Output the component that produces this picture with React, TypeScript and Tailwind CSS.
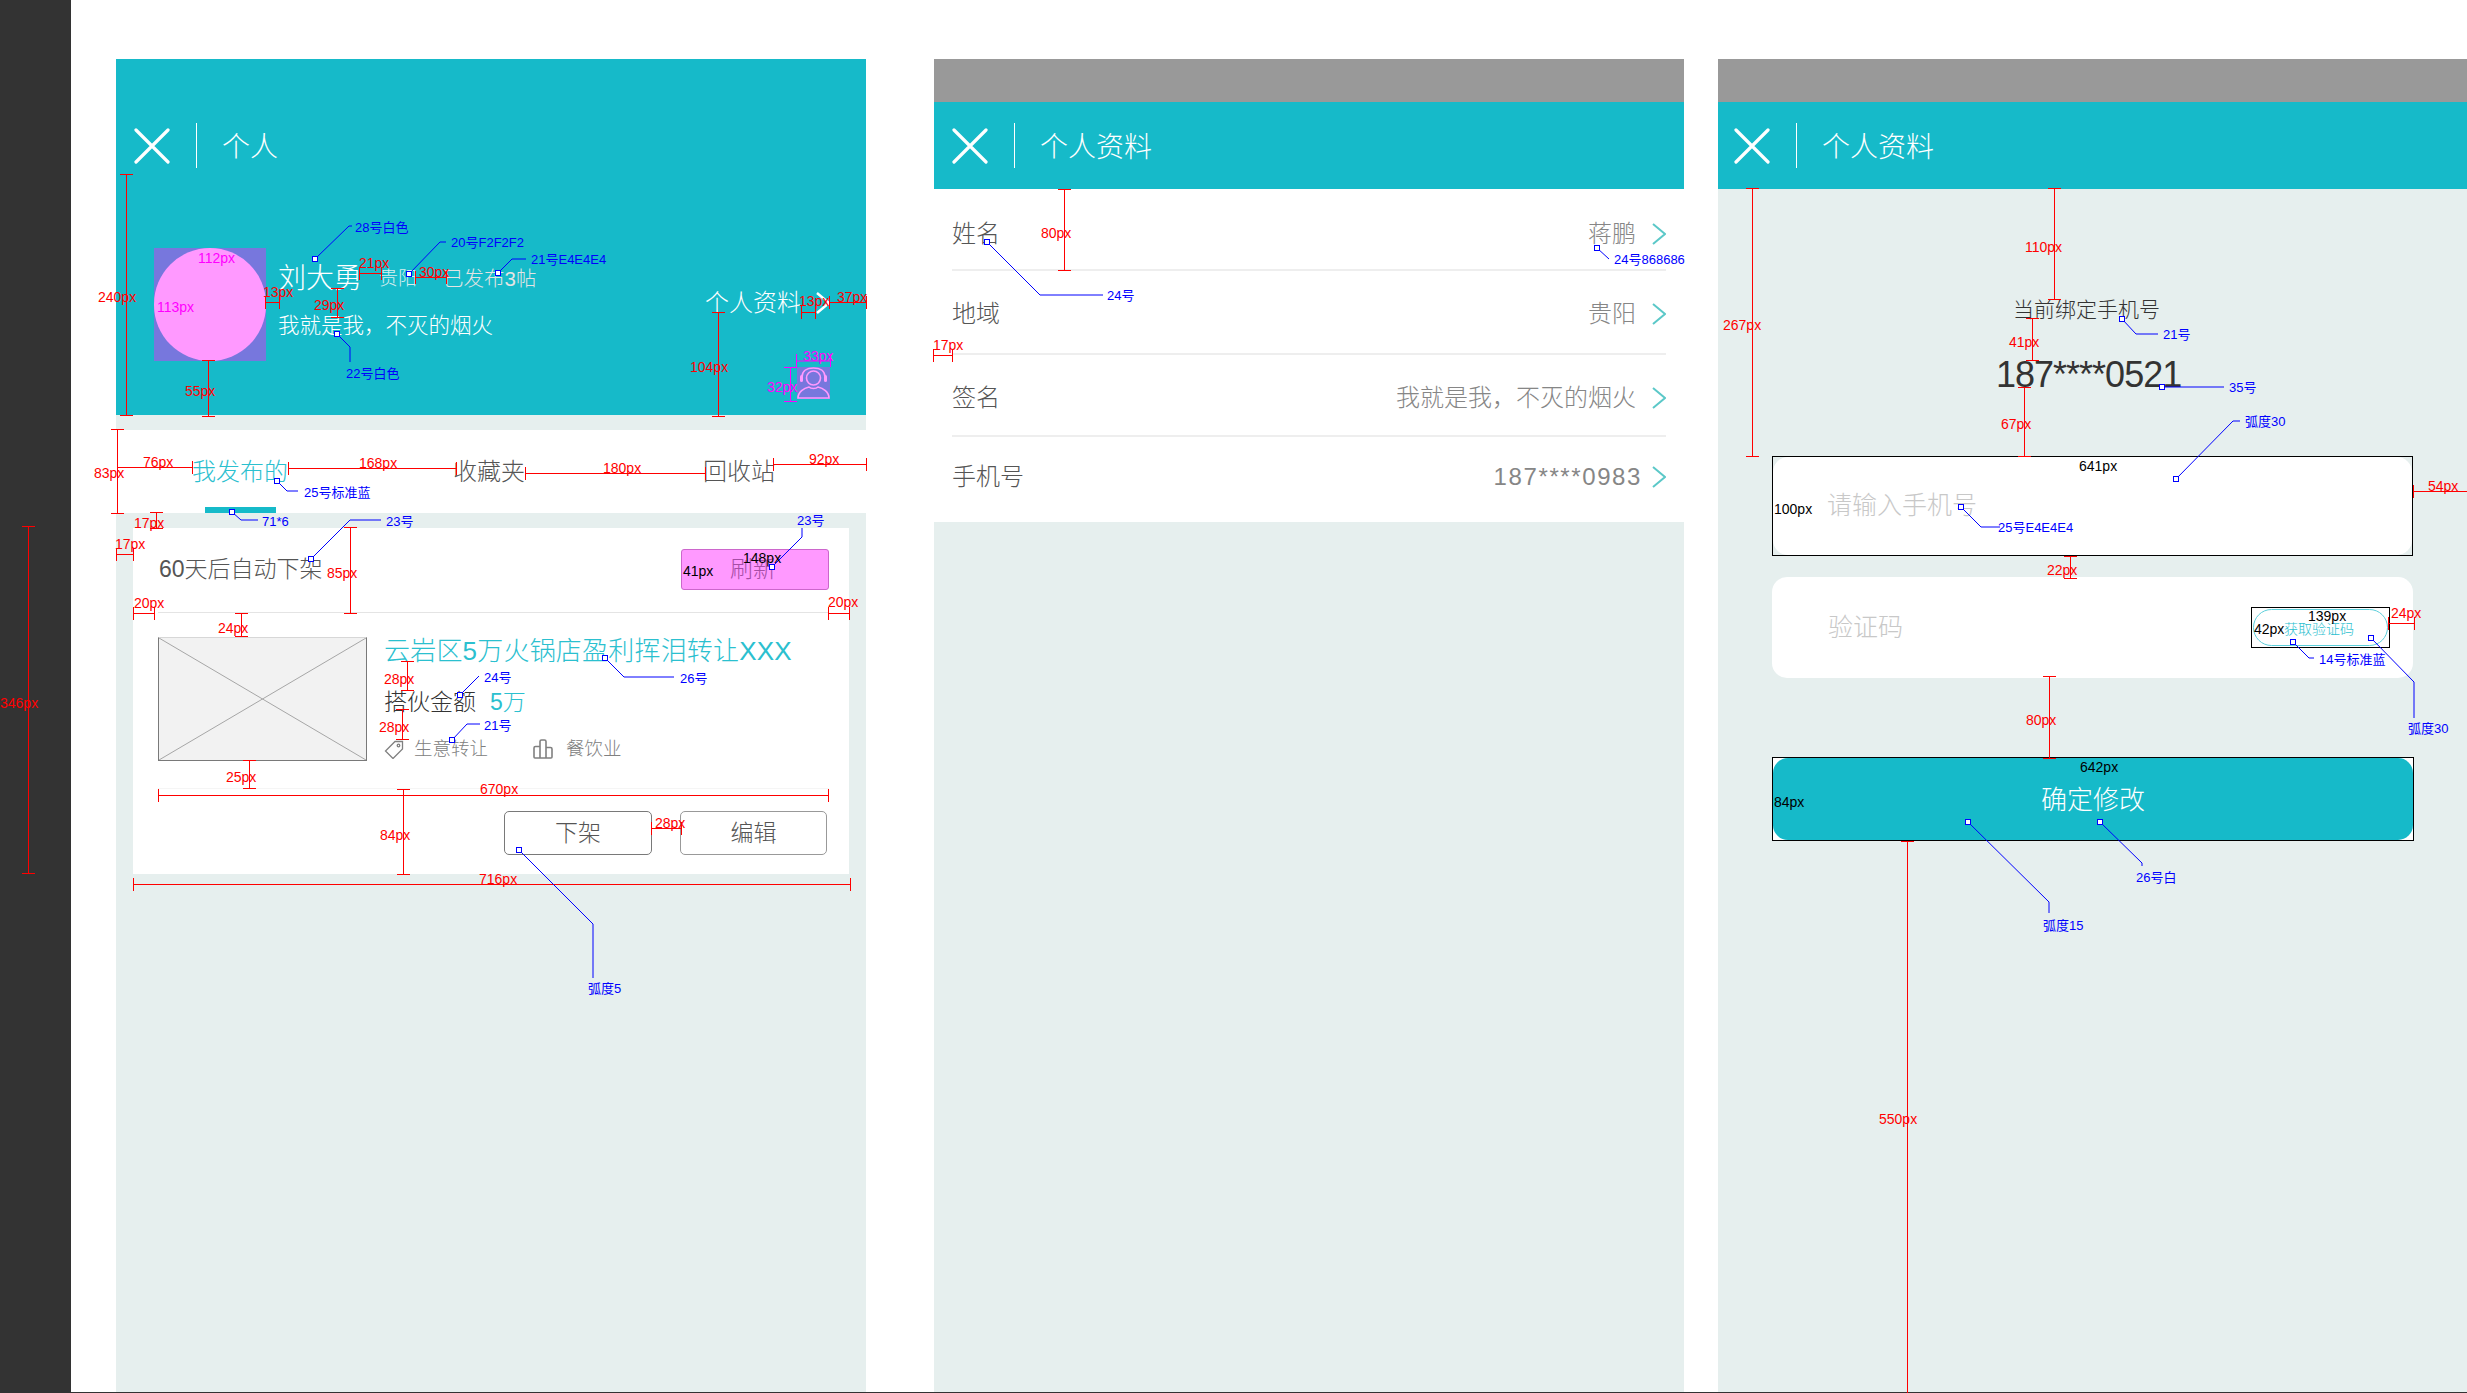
import React from "react";

const teal = "bg-[#16bac9]";

// annotation labels laid over the mockups: [text, position classes]
const redLabels: [string, string][] = [
  ["240px", "left-[98px] top-[288px]"],
  ["55px", "left-[185px] top-[382px]"],
  ["21px", "left-[359px] top-[254px]"],
  ["30px", "left-[419px] top-[263px]"],
  ["13px", "left-[263px] top-[283px]"],
  ["29px", "left-[314px] top-[296px]"],
  ["104px", "left-[690px] top-[358px]"],
  ["13px", "left-[799px] top-[292px]"],
  ["37px", "left-[837px] top-[288px]"],
  ["83px", "left-[94px] top-[464px]"],
  ["76px", "left-[143px] top-[453px]"],
  ["168px", "left-[359px] top-[454px]"],
  ["180px", "left-[603px] top-[459px]"],
  ["92px", "left-[809px] top-[450px]"],
  ["17px", "left-[134px] top-[514px]"],
  ["17px", "left-[115px] top-[535px]"],
  ["85px", "left-[327px] top-[564px]"],
  ["20px", "left-[134px] top-[594px]"],
  ["20px", "left-[828px] top-[593px]"],
  ["24px", "left-[218px] top-[619px]"],
  ["346px", "left-[0px] top-[694px]"],
  ["28px", "left-[384px] top-[670px]"],
  ["28px", "left-[379px] top-[718px]"],
  ["25px", "left-[226px] top-[768px]"],
  ["670px", "left-[480px] top-[780px]"],
  ["84px", "left-[380px] top-[826px]"],
  ["28px", "left-[655px] top-[814px]"],
  ["716px", "left-[479px] top-[870px]"],
  ["80px", "left-[1041px] top-[224px]"],
  ["17px", "left-[933px] top-[336px]"],
  ["110px", "left-[2025px] top-[238px]"],
  ["267px", "left-[1723px] top-[316px]"],
  ["41px", "left-[2009px] top-[333px]"],
  ["67px", "left-[2001px] top-[415px]"],
  ["54px", "left-[2428px] top-[477px]"],
  ["22px", "left-[2047px] top-[561px]"],
  ["24px", "left-[2391px] top-[604px]"],
  ["80px", "left-[2026px] top-[711px]"],
  ["550px", "left-[1879px] top-[1110px]"],
];

const magentaLabels: [string, string][] = [
  ["112px", "left-[198px] top-[249px]"],
  ["113px", "left-[157px] top-[298px]"],
  ["33px", "left-[803px] top-[347px]"],
  ["32px", "left-[767px] top-[378px]"],
];

const blackLabels: [string, string][] = [
  ["148px", "left-[743px] top-[549px]"],
  ["41px", "left-[683px] top-[562px]"],
  ["641px", "left-[2079px] top-[457px]"],
  ["100px", "left-[1774px] top-[500px]"],
  ["139px", "left-[2308px] top-[607px]"],
  ["42px", "left-[2254px] top-[620px]"],
  ["642px", "left-[2080px] top-[758px]"],
  ["84px", "left-[1774px] top-[793px]"],
];

const blueLabels: [string, string][] = [
  ["28号白色", "left-[355px] top-[219px]"],
  ["20号F2F2F2", "left-[451px] top-[234px]"],
  ["21号E4E4E4", "left-[531px] top-[251px]"],
  ["22号白色", "left-[346px] top-[365px]"],
  ["25号标准蓝", "left-[304px] top-[484px]"],
  ["71*6", "left-[262px] top-[513px]"],
  ["23号", "left-[386px] top-[513px]"],
  ["23号", "left-[797px] top-[512px]"],
  ["26号", "left-[680px] top-[670px]"],
  ["24号", "left-[484px] top-[669px]"],
  ["21号", "left-[484px] top-[717px]"],
  ["弧度5", "left-[588px] top-[980px]"],
  ["24号", "left-[1107px] top-[287px]"],
  ["24号868686", "left-[1614px] top-[251px]"],
  ["21号", "left-[2163px] top-[326px]"],
  ["35号", "left-[2229px] top-[379px]"],
  ["弧度30", "left-[2245px] top-[413px]"],
  ["25号E4E4E4", "left-[1998px] top-[519px]"],
  ["14号标准蓝", "left-[2319px] top-[651px]"],
  ["弧度30", "left-[2408px] top-[720px]"],
  ["26号白", "left-[2136px] top-[869px]"],
  ["弧度15", "left-[2043px] top-[917px]"],
];

// [x, y1, y2]
const vDims = [
  [126, 174, 415], [208, 360, 416], [337, 288, 317], [718, 312, 416], [117, 429, 513],
  [28, 526, 873], [156, 512, 528], [350, 527, 613], [241, 613, 636], [407, 661, 690],
  [402, 709, 739], [249, 760, 788], [403, 789, 874], [1064, 189, 270], [1752, 188, 456],
  [2054, 188, 299], [2032, 318, 360], [2024, 387, 456], [2070, 556, 578], [2049, 676, 758],
  [1907, 841, 1400],
];
// [y, x1, x2]
const hDims = [
  [302, 265, 279], [273, 359, 381], [277, 415, 446], [312, 801, 815], [302, 829, 866],
  [467, 117, 192], [468, 288, 456], [473, 525, 705], [464, 773, 866], [554, 116, 133],
  [613, 133, 154], [613, 828, 849], [795, 158, 828], [828, 651, 681], [884, 133, 850],
  [355, 933, 952], [491, 2413, 2467], [623, 2388, 2414],
];

// leader lines: the first point carries the little square
const leaders = [
  "315,259 349,226 352,226",
  "409,274 440,242 446,242",
  "498,273 512,259 526,259",
  "337,334 350,347 350,362",
  "277,481 287,491 298,491",
  "232,512 241,520 258,520",
  "311,559 350,520 381,520",
  "772,567 802,537 802,528",
  "605,658 624,677 674,677",
  "460,695 479,676",
  "452,740 467,724 480,724",
  "519,850 593,924 593,978",
  "987,242 1040,295 1103,295",
  "1597,248 1609,259",
  "2122,319 2136,334 2158,334",
  "2162,387 2224,387",
  "2176,479 2233,421 2240,421",
  "1961,507 1981,527 2000,527",
  "2293,642 2309,658 2314,658",
  "2371,638 2414,682 2414,718",
  "1968,822 2049,902 2049,913",
  "2100,822 2142,863 2142,866",
];

const Labels: React.FC<{ items: [string, string][]; color: string }> = ({ items, color }) => (
  <>
    {items.map(([text, pos], i) => (
      <span key={i} className={`absolute whitespace-nowrap leading-[18px] font-normal ${color} ${pos}`}>
        {text}
      </span>
    ))}
  </>
);

const Annotations: React.FC = () => (
  <>
    <svg className="absolute left-0 top-0 pointer-events-none" width={2467} height={1393} fill="none">
      {vDims.map(([x, a, b], i) => (
        <path key={i} d={`M${x + 0.5} ${a}V${b}M${x - 6} ${a + 0.5}H${x + 7}M${x - 6} ${b + 0.5}H${x + 7}`} stroke="#ff0000" />
      ))}
      {hDims.map(([y, a, b], i) => (
        <path key={i} d={`M${a} ${y + 0.5}H${b}M${a + 0.5} ${y - 6}V${y + 7}M${b + 0.5} ${y - 6}V${y + 7}`} stroke="#ff0000" />
      ))}
      {leaders.map((pts, i) => {
        const [x, y] = pts.split(" ")[0].split(",").map(Number);
        return (
          <g key={i} stroke="#0000ff">
            <polyline points={pts} />
            <rect x={x - 2.5} y={y - 2.5} width={5} height={5} fill="#ffffff" />
          </g>
        );
      })}
      {/* avatar measurements */}
      <path d="M796 361H831M796.5 354V367M830.5 354V367M790.5 367V401M784 367.5H797M784 401.5H797" stroke="#ff00ff" />
    </svg>
    <div className="text-[14px]">
      <Labels items={redLabels} color="text-[#ff0000]" />
      <Labels items={magentaLabels} color="text-[#ff00ff]" />
      <Labels items={blackLabels} color="text-black" />
    </div>
    <div className="text-[13px]">
      <Labels items={blueLabels} color="text-[#0000ff]" />
    </div>
  </>
);

const CloseIcon = () => (
  <svg width="36" height="36" viewBox="0 0 36 36" fill="none" stroke="#fff" strokeWidth="3.2" strokeLinecap="round">
    <path d="M2 2L34 34M34 2L2 34" />
  </svg>
);

const Chevron: React.FC<{ color?: string; width?: number }> = ({ color = "#5bc8c8", width = 2 }) => (
  <svg width="14" height="22" viewBox="0 0 14 22" fill="none" stroke={color} strokeWidth={width}>
    <path d="M1 1L13 11L1 21" />
  </svg>
);

const Header: React.FC<{ title: string; left?: string }> = ({ title, left = "pl-[18px]" }) => (
  <div className={`flex h-[87px] items-center ${left}`}>
    <CloseIcon />
    <div className="ml-[26px] h-[45px] w-px bg-white" />
    <span className="ml-[25px] pt-[5px] text-[28px] text-white">{title}</span>
  </div>
);

const HeadsetIcon = () => (
  <svg width="33" height="32" viewBox="0 0 33 32" fill="none" stroke="#ff99ff" strokeWidth="1.6" className="bg-[#7777dd]">
    <circle cx="16.5" cy="11" r="7" />
    <path d="M5 14V10C5 4 10 1 16.5 1S28 4 28 10V14" />
    <rect x="3" y="8" width="3" height="7" rx="1.5" fill="#ff99ff" stroke="none" />
    <rect x="27" y="8" width="3" height="7" rx="1.5" fill="#ff99ff" stroke="none" />
    <path d="M1 31C1 25 7 21 12 20C14 22 19 22 21 20C26 21 32 25 32 31Z" />
  </svg>
);

const TagIcon = () => (
  <svg width="20" height="19" viewBox="0 0 20 19" fill="none" stroke="#808080" strokeWidth="1.3">
    <path d="M11 1.5H18.5V9L9 18.5L1.5 11Z" />
    <circle cx="14.5" cy="5.5" r="1.3" />
  </svg>
);

const ChartIcon = () => (
  <svg width="20" height="20" viewBox="0 0 20 20" fill="none" stroke="#808080" strokeWidth="1.6">
    <path d="M7 7.5H2.5C1.5 7.5 1 8 1 9V18C1 18.600 1.500 19 2 19H18C18.500 19 19 18.600 19 18V10C19 9 18.500 8.500 17.500 8.500H13M7 19V2.500C7 1.500 7.500 1 8.500 1H11.500C12.500 1 13 1.500 13 2.500V19" />
  </svg>
);

const PersonalPanel = () => (
  <div className="flex w-[750px] flex-col bg-[#e6efee]">
    <div className={`h-[356px] ${teal} pt-[43px]`}>
      <Header title="个人" />
      <div className="mt-[59px] flex pl-[38px]">
        <div className="h-[113px] w-[112px] bg-[#7777dd]">
          <div className="h-full w-full rounded-full bg-[#ff99ff]" />
        </div>
        <div className="ml-[12px] mt-[13px]">
          <div className="flex items-center text-[#e4e4e4]">
            <span className="text-[28px] leading-[36px] text-white">刘大勇</span>
            <span className="ml-[17px] text-[19px] text-[#d6eef0]">贵阳</span>
            <span className="ml-[26px] text-[20.5px]">已发布3帖</span>
          </div>
          <div className="mt-[15px] text-[21.5px] leading-[28px] text-white">我就是我，不灭的烟火</div>
        </div>
        <div className="ml-auto mr-[36px] flex flex-col items-end">
          <div className="mt-[40px] flex items-center text-[24px] leading-[30px] text-white">
            个人资料
            <span className="ml-[15px]">
              <Chevron color="#ffffff" width={2.5} />
            </span>
          </div>
          <div className="mt-[49px]">
            <HeadsetIcon />
          </div>
        </div>
      </div>
    </div>

    <div className="mt-[15px] flex h-[83px] items-center bg-white pl-[76px] text-[24px] text-[#555555]">
      <span className="relative flex h-full items-center text-[#2bc0cf]">
        我发布的
        <span className={`absolute bottom-0 left-[13px] h-[6px] w-[71px] ${teal}`} />
      </span>
      <span className="ml-[165px]">收藏夹</span>
      <span className="ml-[178px]">回收站</span>
    </div>

    <div className="mx-[17px] mt-[15px] h-[346px] bg-white pl-[25px] pr-[20px] text-[#555555]">
      <div className="flex h-[85px] items-center justify-between border-b border-[#e4e4e4] pb-[2px]">
        <span className="ml-px text-[23px]">60天后自动下架</span>
        <div className="flex h-[41px] w-[148px] items-center justify-center rounded-[3px] border border-[#cc66cc] bg-[#ff99ff] pr-[4px] text-[23px] text-[#a64da6]">
          刷新
        </div>
      </div>
      <div className="flex h-[176px] border-b border-[#f5f5f5] pt-[24px]">
        <div className="h-[124px] w-[209px] border border-[#797979] border-t-[#d7d7d7] bg-[#f2f2f2]">
          <svg width="207" height="122" viewBox="0 0 207 122" stroke="#a6a6a6" strokeWidth="1">
            <path d="M0 0L207 122M207 0L0 122" />
          </svg>
        </div>
        <div className="ml-[17px]">
          <div className="text-[26px] leading-[28px] tracking-[0.2px] text-[#2bc0cf]">云岩区5万火锅店盈利挥泪转让XXX</div>
          <div className="mt-[22px] flex items-center text-[23px] leading-[30px]">
            <span className="text-[#333333]">搭伙金额</span>
            <span className="ml-[14px] text-[#2bc0cf]">5万</span>
          </div>
          <div className="mt-[19px] flex items-center text-[18.5px] leading-[26px] text-[#808080]">
            <TagIcon />
            <span className="ml-[10px]">生意转让</span>
            <span className="ml-[45px]">
              <ChartIcon />
            </span>
            <span className="ml-[13px]">餐饮业</span>
          </div>
        </div>
      </div>
      <div className="mr-[2px] flex justify-end gap-[28px] pt-[22px] text-[23px]">
        <div className="flex h-[44px] w-[148px] items-center justify-center rounded-[5px] border border-[#797979]">下架</div>
        <div className="flex h-[44px] w-[147px] items-center justify-center rounded-[5px] border border-[#999999]">编辑</div>
      </div>
    </div>
  </div>
);

const profileRows = [
  { label: "姓名", value: "蒋鹏", row: "h-[82px] pt-[9px]", text: "", gap: "ml-[16px]" },
  { label: "地域", value: "贵阳", row: "h-[84px] pt-[3px]", text: "", gap: "ml-[16px]" },
  { label: "签名", value: "我就是我，不灭的烟火", row: "h-[82px] pt-[6px]", text: "", gap: "ml-[16px]" },
  { label: "手机号", value: "187****0983", row: "h-[85px] pb-[6px]", text: "tracking-[1.6px]", gap: "ml-[10px]" },
];

const ProfilePanel = () => (
  <div className="ml-[68px] flex w-[750px] flex-col bg-[#e6efee]">
    <div className="h-[43px] bg-[#999999]" />
    <div className={teal}>
      <Header title="个人资料" />
    </div>
    <div className="bg-white">
      {profileRows.map((row, i) => (
        <div key={row.label} className={`mx-[18px] flex items-center justify-between ${row.row} ${i < 3 ? "border-b-2 border-[#eeeeee]" : ""}`}>
          <span className="text-[24px] text-[#555555]">{row.label}</span>
          <div className="flex items-center text-[24px] text-[#868686]">
            <span className={row.text}>{row.value}</span>
            <span className={row.gap}>
              <Chevron />
            </span>
          </div>
        </div>
      ))}
    </div>
  </div>
);

const PhonePanel = () => (
  <div className="ml-[34px] flex w-[749px] flex-col bg-[#e6efee]">
    <div className="h-[43px] bg-[#999999]" />
    <div className={teal}>
      <Header title="个人资料" left="pl-[16px]" />
    </div>
    <div className="flex flex-col pl-[54px] pt-[108px]">
      <div className="ml-[241px] text-[21px] leading-[26px] text-[#333333]">当前绑定手机号</div>
      <div className="ml-[224px] mt-[32px] text-[36px] leading-[40px] tracking-[-1px] text-[#333333]">187****0521</div>
      <div className="mt-[61px] h-[100px] w-[641px] border border-black">
        <div className="flex h-full w-full items-center rounded-[15px] bg-white pl-[54px]">
          <span className="text-[25px] text-[#c8c8c8]">请输入手机号</span>
        </div>
      </div>
      <div className="mt-[21px] flex h-[101px] w-[641px] items-center rounded-[15px] bg-white pl-[56px]">
        <span className="text-[25px] text-[#c8c8c8]">验证码</span>
        <div className="ml-auto mr-[23px] h-[41px] w-[139px] border border-black p-px">
          <div className="flex h-full w-full items-center justify-end rounded-full border border-[#5ccfdb] pr-[33px] pt-[3px] text-[14px] text-[#2bc0cf]">
            获取验证码
          </div>
        </div>
      </div>
      <div className="mt-[79px] h-[84px] w-[642px] border border-black bg-white">
        <div className={`flex h-full w-full items-center justify-center rounded-[15px] pt-[2px] ${teal} text-[26px] text-white`}>确定修改</div>
      </div>
    </div>
  </div>
);

export default function App() {
  return (
    <div className="relative h-[1393px] w-[2467px] overflow-hidden bg-white font-['Liberation_Sans','Noto_Sans_CJK_SC',sans-serif] font-light">
      <div className="flex h-[1392px]">
        <div className="w-[71px] bg-[#333333]" />
        <div className="ml-[45px] flex pt-[59px]">
          <PersonalPanel />
          <ProfilePanel />
          <PhonePanel />
        </div>
      </div>
      <div className="h-px bg-[#333333]" />
      <Annotations />
    </div>
  );
}
